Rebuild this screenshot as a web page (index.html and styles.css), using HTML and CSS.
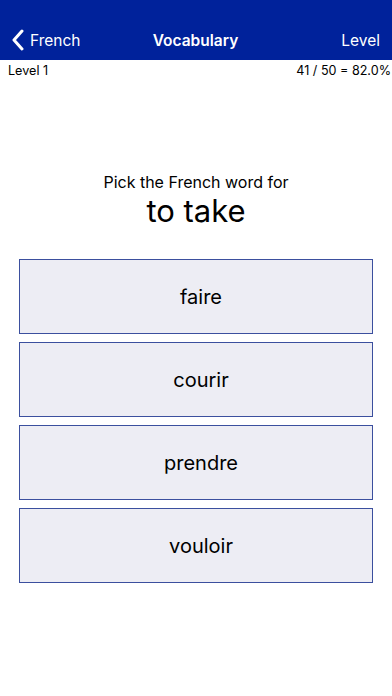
FILE: index.html
```html
<!DOCTYPE html>
<html>
<head>
<meta charset="utf-8">
<link rel="stylesheet" href="styles.css">
</head>
<body>
<header class="nav">
  <div class="nav-left">
    <svg class="chev" width="14" height="22" viewBox="0 0 14 22"><path d="M11 2 L3 11 L11 20" fill="none" stroke="#fff" stroke-width="3" stroke-linecap="round" stroke-linejoin="round"/></svg>
    <span>French</span>
  </div>
  <div class="nav-title">Vocabulary</div>
  <div class="nav-right">Level</div>
</header>
<div class="stats">
  <span>Level 1</span>
  <span>41 / 50 = 82.0%</span>
</div>
<main class="quiz">
  <div class="prompt">Pick the French word for</div>
  <div class="word">to take</div>
  <div class="answers">
    <div class="answer">faire</div>
    <div class="answer">courir</div>
    <div class="answer">prendre</div>
    <div class="answer">vouloir</div>
  </div>
</main>
</body>
</html>
```
FILE: styles.css
```css
html, body {
  margin: 0;
  padding: 0;
  background: #fff;
  font-family: Inter, "Liberation Sans", sans-serif;
  color: #000;
}
.nav {
  height: 60px;
  box-sizing: border-box;
  padding: 20px 12px 0 11px;
  background: #00229b;
  color: #fff;
  display: grid;
  grid-template-columns: 1fr auto 1fr;
  align-items: center;
  font-size: 15.5px;
}
.nav-left {
  display: flex;
  align-items: center;
  gap: 5px;
}
.chev { display: block; }
.nav-title {
  font-weight: 600;
  text-align: center;
}
.nav-right {
  text-align: right;
}
.stats {
  display: flex;
  justify-content: space-between;
  padding: 2px 1px 0 8px;
  font-size: 12.6px;
  height: 18px;
  line-height: 18px;
}
.quiz {
  display: flex;
  flex-direction: column;
  align-items: center;
  padding-top: 92px;
}
.prompt {
  font-size: 16px;
  line-height: 20px;
}
.word {
  font-size: 31px;
  line-height: 34px;
  margin-top: 2px;
}
.answers {
  margin-top: 31px;
  width: 354px;
  display: flex;
  flex-direction: column;
  gap: 8px;
}
.answer {
  height: 75px;
  box-sizing: border-box;
  border: 1px solid #3b4f9e;
  background: #ededf4;
  display: flex;
  align-items: center;
  justify-content: center;
  padding-left: 10px;
  font-size: 20px;
}
```
